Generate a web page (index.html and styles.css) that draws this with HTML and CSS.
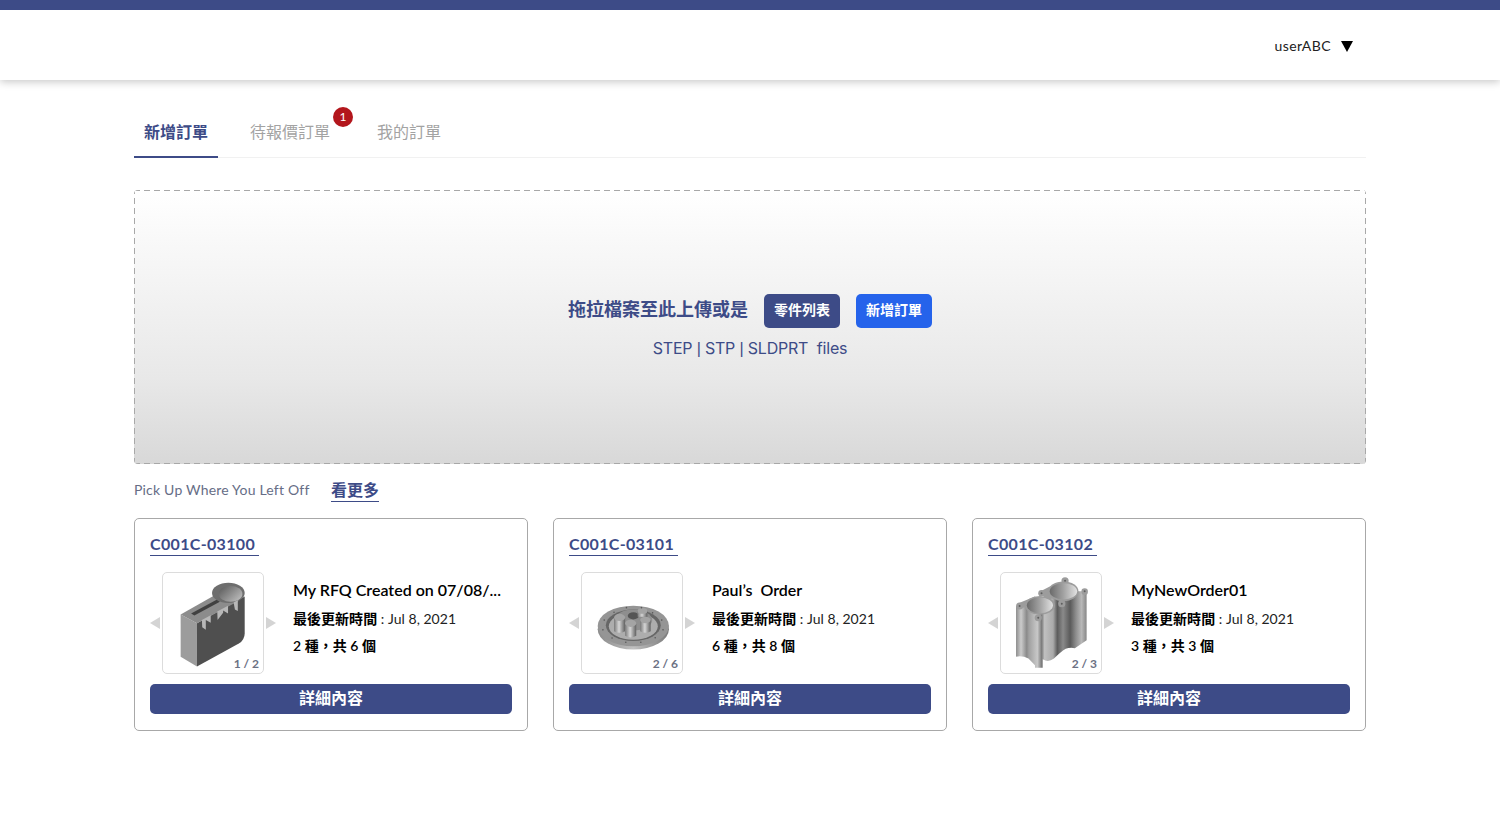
FILE: index.html
```html
<!DOCTYPE html>
<html lang="zh-Hant">
<head>
<meta charset="utf-8">
<title>新增訂單</title>
<link rel="stylesheet" href="styles.css">
</head>
<body>
<header class="header">
  <div class="user"><span>userABC</span><span class="caret"></span></div>
</header>
<main class="main">
  <nav class="tabs">
    <a class="tab active">新增訂單</a>
    <a class="tab second">待報價訂單<span class="badge">1</span></a>
    <a class="tab">我的訂單</a>
  </nav>
  <section class="drop">
    <div class="drop-row">
      <strong class="drop-title">拖拉檔案至此上傳或是</strong>
      <button class="btn navy">零件列表</button>
      <button class="btn blue">新增訂單</button>
    </div>
    <p class="drop-files">STEP <span class="pipe">|</span> STP <span class="pipe">|</span> SLDPRT&nbsp; files</p>
  </section>
  <div class="more-row">
    <span class="more-label">Pick Up Where You Left Off</span>
    <a class="more-link">看更多</a>
  </div>
  <section class="cards">
    <article class="card">
      <div class="card-head"><a class="order-id">C001C-03100</a></div>
      <div class="card-body">
        <span class="arrow left"></span>
        <div class="thumb">
          <svg viewBox="6 6 306 306" class="model">
            <defs>
              <linearGradient id="hole1" x1="0" x2="1" y1="0" y2="0.7"><stop offset="0" stop-color="#585858"/><stop offset=".55" stop-color="#8c8c8c"/><stop offset="1" stop-color="#b8b8b8"/></linearGradient>
            </defs>
            <path d="M60 133 110 160V292L60 262Z" fill="#9c9c9c"/>
            <path d="M110 160 256 78V190Q256 210 238 222L110 292Z" fill="#4f4f4f"/>
            <path d="M60 133 160 76 240 90 110 160Z" fill="#8c8c8c"/>
            <ellipse cx="206" cy="67" rx="50" ry="31" fill="#6e6e6e"/>
            <ellipse cx="213" cy="70" rx="36" ry="24" fill="url(#hole1)"/>
            <path d="M92 130 170 88 180 94 102 136Z" fill="#404040"/>
            <path d="M125 150 152 135V158L137 150V180L126 172Z" fill="#b8b8b8"/>
            <path d="M172 124 205 106V130L190 121V128L173 150Z" fill="#b8b8b8"/>
            <path d="M222 96 235 89V122L226 118Z" fill="#b8b8b8"/>
          </svg>
          <span class="count">1 / 2</span>
        </div>
        <span class="arrow right"></span>
        <div class="info">
          <h3 class="name">My RFQ Created on 07/08/...</h3>
          <p class="meta"><b>最後更新時間</b> : Jul 8, 2021</p>
          <p class="meta qty">2 種<span class="comma">，</span>共 6 個</p>
        </div>
      </div>
      <button class="detail">詳細內容</button>
    </article>
    <article class="card">
      <div class="card-head"><a class="order-id">C001C-03101</a></div>
      <div class="card-body">
        <span class="arrow left"></span>
        <div class="thumb">
          <svg viewBox="6 6 306 306" class="model">
            <defs>
              <linearGradient id="disc" x1="0" x2="1" y1="0" y2="0"><stop offset="0" stop-color="#8a8a8a"/><stop offset=".5" stop-color="#c0c0c0"/><stop offset="1" stop-color="#7a7a7a"/></linearGradient>
              <linearGradient id="peg" x1="0" x2="1" y1="0" y2="0"><stop offset="0" stop-color="#7a7a7a"/><stop offset=".45" stop-color="#d6d6d6"/><stop offset="1" stop-color="#606060"/></linearGradient>
            </defs>
            <ellipse cx="163" cy="178" rx="109" ry="62" fill="url(#disc)"/>
            <ellipse cx="163" cy="168" rx="109" ry="62" fill="#959595"/>
            <ellipse cx="163" cy="166" rx="84" ry="48" fill="#666"/>
            <ellipse cx="163" cy="169" rx="75" ry="41" fill="#adadad"/>
            <ellipse cx="163" cy="150" rx="58" ry="32" fill="#8e8e8e"/>
            <ellipse cx="163" cy="137" rx="17" ry="11" fill="#555"/>
            <path d="M104 142H138V184Q121 194 104 184Z" fill="url(#peg)"/>
            <ellipse cx="121" cy="142" rx="17" ry="11" fill="#a4a4a4"/>
            <path d="M184 150H216V184Q200 194 184 184Z" fill="url(#peg)"/>
            <ellipse cx="200" cy="150" rx="16" ry="10" fill="#a4a4a4"/>
            <path d="M138 160H172V198Q155 208 138 198Z" fill="url(#peg)"/>
            <ellipse cx="155" cy="160" rx="17" ry="11" fill="#a4a4a4"/>
            <path d="M176 122H206V140H176Z" fill="url(#peg)"/>
            <ellipse cx="191" cy="122" rx="15" ry="9" fill="#a4a4a4"/>
            <g fill="#5a5a5a">
              <circle cx="70" cy="180" r="2.5"/><circle cx="98" cy="205" r="2.5"/><circle cx="140" cy="218" r="2.5"/><circle cx="186" cy="218" r="2.5"/><circle cx="230" cy="204" r="2.5"/><circle cx="254" cy="180" r="2.5"/><circle cx="250" cy="150" r="2.5"/><circle cx="222" cy="128" r="2.5"/><circle cx="188" cy="112" r="2.5"/><circle cx="142" cy="112" r="2.5"/><circle cx="104" cy="126" r="2.5"/><circle cx="74" cy="150" r="2.5"/>
            </g>
          </svg>
          <span class="count">2 / 6</span>
        </div>
        <span class="arrow right"></span>
        <div class="info">
          <h3 class="name">Paul’s&nbsp; Order</h3>
          <p class="meta"><b>最後更新時間</b> : Jul 8, 2021</p>
          <p class="meta qty">6 種<span class="comma">，</span>共 8 個</p>
        </div>
      </div>
      <button class="detail">詳細內容</button>
    </article>
    <article class="card">
      <div class="card-head"><a class="order-id">C001C-03102</a></div>
      <div class="card-body">
        <span class="arrow left"></span>
        <div class="thumb">
          <svg viewBox="6 6 306 306" class="model">
            <defs>
              <linearGradient id="tube" gradientUnits="userSpaceOnUse" x1="52" x2="270" y1="0" y2="0">
                <stop offset="0" stop-color="#8c8c8c"/><stop offset=".07" stop-color="#cccccc"/><stop offset=".15" stop-color="#8a8a8a"/><stop offset=".18" stop-color="#a0a0a0"/><stop offset=".3" stop-color="#c8c8c8"/><stop offset=".36" stop-color="#7a7a7a"/><stop offset=".4" stop-color="#c0c0c0"/><stop offset=".52" stop-color="#aaaaaa"/><stop offset=".58" stop-color="#5c5c5c"/><stop offset=".66" stop-color="#8a8a8a"/><stop offset=".76" stop-color="#5a5a5a"/><stop offset=".84" stop-color="#8d8d8d"/><stop offset=".92" stop-color="#b8b8b8"/><stop offset="1" stop-color="#808080"/>
              </linearGradient>
              <linearGradient id="bore" x1="0" x2="1" y1="0" y2="0"><stop offset="0" stop-color="#6a6a6a"/><stop offset=".5" stop-color="#a2a2a2"/><stop offset="1" stop-color="#e2e2e2"/></linearGradient>
            </defs>
            <path d="M52 107V262Q72 258 90 268L110 288V296H134V270Q150 282 168 268 188 248 204 238 218 232 232 236L268 212V62H197L125 105Z" fill="url(#tube)"/>
            <g fill="#9c9c9c">
              <ellipse cx="125" cy="105" rx="46" ry="29"/>
              <ellipse cx="197" cy="62" rx="46" ry="30"/>
              <circle cx="63" cy="107" r="11"/><circle cx="120" cy="143" r="11"/><circle cx="192" cy="100" r="11"/><circle cx="262" cy="63" r="10"/><circle cx="202" cy="30" r="11"/><circle cx="130" cy="68" r="10"/>
              <path d="M63 97 110 78 125 100 75 112ZM130 60 170 40 180 80 140 90Z"/>
            </g>
            <ellipse cx="125" cy="105" rx="40" ry="24" fill="url(#bore)"/>
            <ellipse cx="197" cy="62" rx="42" ry="25" fill="url(#bore)"/>
            <g fill="#5f5f5f"><circle cx="63" cy="107" r="3"/><circle cx="120" cy="143" r="3"/><circle cx="192" cy="100" r="3"/><circle cx="262" cy="62" r="3"/><circle cx="202" cy="30" r="3"/><circle cx="130" cy="68" r="3"/></g>
          </svg>
          <span class="count">2 / 3</span>
        </div>
        <span class="arrow right"></span>
        <div class="info">
          <h3 class="name">MyNewOrder01</h3>
          <p class="meta"><b>最後更新時間</b> : Jul 8, 2021</p>
          <p class="meta qty">3 種<span class="comma">，</span>共 3 個</p>
        </div>
      </div>
      <button class="detail">詳細內容</button>
    </article>
  </section>
</main>
</body>
</html>
```
FILE: styles.css
```css
* { box-sizing: border-box; }
html, body { margin: 0; padding: 0; height: 100%; }
body {
  background: #fff;
  color: #000;
  font-family: Lato, "Noto Sans CJK TC", sans-serif;
  overflow: hidden;
}
.header {
  height: 80px;
  background: #fff;
  border-top: 10px solid #3d4b87;
  box-shadow: 0 2px 8px rgba(0, 0, 0, .22);
  display: flex;
  align-items: center;
  justify-content: flex-end;
  padding-right: 147px;
}
.user { display: flex; align-items: center; gap: 10px; font-size: 14px; letter-spacing: .45px; color: #222; }
.caret {
  width: 0;
  height: 0;
  margin-top: 2px;
  border-left: 6.5px solid transparent;
  border-right: 6.5px solid transparent;
  border-top: 11px solid #000;
}
.main { width: 1232px; margin: 0 auto; }
.tabs {
  margin-top: 28px;
  height: 50px;
  display: flex;
  border-bottom: 1px solid #f1f1f1;
}
.tab {
  position: relative;
  padding: 0 10px;
  height: 50px;
  line-height: 48px;
  font-size: 16px;
  color: #a3a3a3;
  margin-right: 22px;
}
.tab.second { margin-right: 27px; }
.tab.active {
  color: #3d4b87;
  font-weight: 700;
  border-bottom: 2px solid #3d4b87;
}
.badge {
  position: absolute;
  top: -1px;
  right: -13px;
  width: 20px;
  height: 20px;
  border-radius: 50%;
  background: #b3161c;
  color: #fff;
  font-size: 12px;
  line-height: 20px;
  text-align: center;
}
.drop {
  margin-top: 32px;
  height: 274px;
  border-radius: 4px;
  background-image:
    repeating-linear-gradient(90deg, #a8a8a8 0 6px, transparent 6px 10px),
    repeating-linear-gradient(90deg, #a8a8a8 0 6px, transparent 6px 10px),
    repeating-linear-gradient(0deg, #a8a8a8 0 6px, transparent 6px 10px),
    repeating-linear-gradient(0deg, #a8a8a8 0 6px, transparent 6px 10px),
    linear-gradient(#fff, #e8e8e8 69%, #d8d8d8);
  background-size: 100% 1px, 100% 1px, 1px 100%, 1px 100%, 100% 100%;
  background-position: 0 0, 0 100%, 0 0, 100% 0, 0 0;
  background-repeat: no-repeat;
  display: flex;
  flex-direction: column;
  align-items: center;
  padding-top: 104px;
}
.drop-row { display: flex; align-items: center; }
.drop-title { font-size: 18px; line-height: 26px; color: #3d4b87; font-weight: 700; margin-right: 16px; padding-bottom: 4px; }
.btn {
  height: 34px;
  width: 76px;
  border: 0;
  border-radius: 5px;
  color: #fff;
  font: 700 14px "Noto Sans CJK TC", sans-serif;
  padding: 0 0 4px;
}
.btn.navy { background: #3d4b87; margin-right: 16px; }
.btn.blue { background: #2563eb; }
.drop-files {
  margin: 9px 0 0;
  font: 16px/22px Inter, sans-serif;
  color: #3d4b87;
  letter-spacing: -.2px;
}
.pipe { font-family: "Liberation Sans", sans-serif; }
.more-row { height: 54px; display: flex; align-items: center; padding-bottom: 3px; }
.more-label { font-size: 14px; letter-spacing: .2px; color: #666d86; width: 197px; }
.more-link {
  margin-top: 2px;
  font-size: 16px;
  font-weight: 700;
  color: #3d4b87;
  border-bottom: 1px solid #3d4b87;
  line-height: 22px;
}
.cards { display: grid; grid-template-columns: repeat(3, 394px); gap: 25px; }
.card {
  height: 213px;
  border: 1px solid #a8a8a8;
  border-radius: 5px;
  padding: 15px;
}
.card-head { height: 38px; }
.order-id {
  display: inline-block;
  padding: 0 4px 1px 0;
  font-size: 16px;
  font-weight: 700;
  line-height: 20px;
  letter-spacing: .33px;
  color: #3d4b87;
  border-bottom: 1px solid #3d4b87;
}
.card-body { display: flex; align-items: center; height: 102px; }
.arrow { width: 0; height: 0; border-top: 6px solid transparent; border-bottom: 6px solid transparent; }
.arrow.left { border-right: 10px solid #d4d4d4; margin-right: 2px; }
.arrow.right { border-left: 10px solid #d4d4d4; margin-left: 2px; }
.thumb {
  position: relative;
  width: 102px;
  height: 102px;
  border: 1px solid #dcdcdc;
  border-radius: 5px;
  background: #fff;
}
.model { display: block; width: 100px; height: 100px; }
.count {
  position: absolute;
  right: 4px;
  bottom: 2px;
  font-size: 12px;
  font-weight: 700;
  color: #6b7183;
}
.info { margin-left: 17px; padding-bottom: 13px; }
.name { margin: 0 0 9px; font-size: 16px; font-weight: 600; line-height: 22px; }
.meta { margin: 0 0 8px; font-size: 14px; line-height: 18px; letter-spacing: .03px; color: #222; }
.meta b { font-weight: 700; color: #000; }
.meta.qty { margin: 0; font-weight: 600; color: #000; }
.comma { font-family: "Noto Sans CJK SC", sans-serif; }
.detail {
  display: block;
  width: 100%;
  margin-top: 10px;
  height: 30px;
  border: 0;
  border-radius: 5px;
  background: #3d4b87;
  color: #fff;
  font: 700 16px "Noto Sans CJK TC", sans-serif;
  padding: 0 0 4px;
}
```
